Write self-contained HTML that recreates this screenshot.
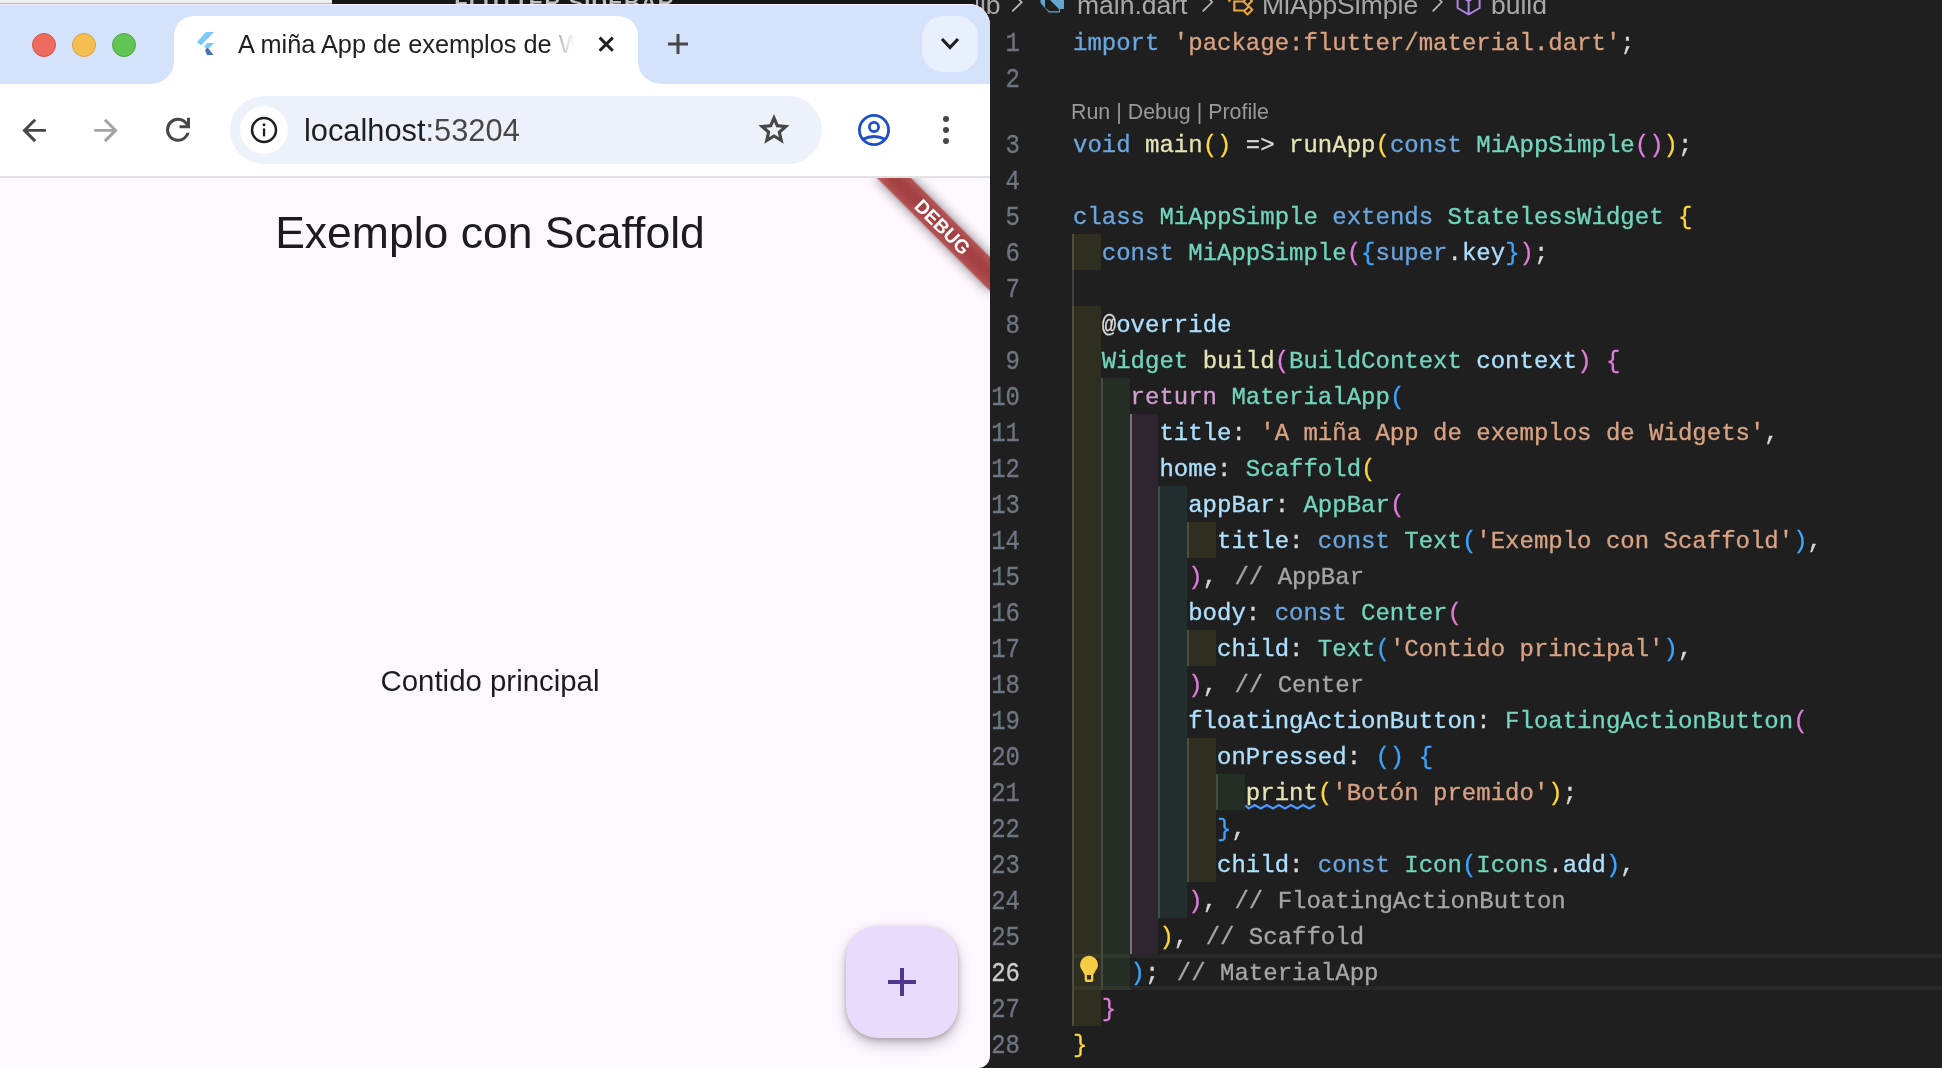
<!DOCTYPE html>
<html><head><meta charset="utf-8"><style>
*{margin:0;padding:0;box-sizing:border-box}
html,body{width:1942px;height:1068px;overflow:hidden;background:#1f1f1f}
body{position:relative;font-family:"Liberation Sans",sans-serif}
.ab{position:absolute}
.ln{position:absolute;left:960px;width:60px;text-align:right;font-family:"Liberation Mono",monospace;font-size:24px;line-height:36px;height:36px;white-space:pre;-webkit-text-stroke:0.3px currentColor;transform:scaleY(1.13);transform-origin:50% 25px}
.cl{position:absolute;left:1073px;font-family:"Liberation Mono",monospace;font-size:24px;line-height:36px;height:36px;white-space:pre;-webkit-text-stroke:0.3px currentColor}
.g{position:absolute;width:2px;height:36px}
.rb{position:absolute;height:36px}
</style></head><body>
<div id="root" style="position:absolute;left:0;top:0;width:1942px;height:1068px;overflow:hidden;will-change:transform">
<div style="position:absolute;left:1073px;top:954px;width:869px;height:36px;border-top:4px solid #282828;border-bottom:4px solid #282828"></div>
<div class="g" style="left:1072.0px;top:234px;background:#404040"></div>
<div class="g" style="left:1072.0px;top:270px;background:#404040"></div>
<div class="g" style="left:1072.0px;top:306px;background:#404040"></div>
<div class="g" style="left:1072.0px;top:342px;background:#404040"></div>
<div class="g" style="left:1072.0px;top:378px;background:#404040"></div>
<div class="g" style="left:1100.8px;top:378px;background:#404040"></div>
<div class="g" style="left:1072.0px;top:414px;background:#404040"></div>
<div class="g" style="left:1100.8px;top:414px;background:#404040"></div>
<div class="g" style="left:1129.6px;top:414px;background:#707070"></div>
<div class="g" style="left:1072.0px;top:450px;background:#404040"></div>
<div class="g" style="left:1100.8px;top:450px;background:#404040"></div>
<div class="g" style="left:1129.6px;top:450px;background:#707070"></div>
<div class="g" style="left:1072.0px;top:486px;background:#404040"></div>
<div class="g" style="left:1100.8px;top:486px;background:#404040"></div>
<div class="g" style="left:1129.6px;top:486px;background:#707070"></div>
<div class="g" style="left:1158.4px;top:486px;background:#404040"></div>
<div class="g" style="left:1072.0px;top:522px;background:#404040"></div>
<div class="g" style="left:1100.8px;top:522px;background:#404040"></div>
<div class="g" style="left:1129.6px;top:522px;background:#707070"></div>
<div class="g" style="left:1158.4px;top:522px;background:#404040"></div>
<div class="g" style="left:1187.2px;top:522px;background:#404040"></div>
<div class="g" style="left:1072.0px;top:558px;background:#404040"></div>
<div class="g" style="left:1100.8px;top:558px;background:#404040"></div>
<div class="g" style="left:1129.6px;top:558px;background:#707070"></div>
<div class="g" style="left:1158.4px;top:558px;background:#404040"></div>
<div class="g" style="left:1072.0px;top:594px;background:#404040"></div>
<div class="g" style="left:1100.8px;top:594px;background:#404040"></div>
<div class="g" style="left:1129.6px;top:594px;background:#707070"></div>
<div class="g" style="left:1158.4px;top:594px;background:#404040"></div>
<div class="g" style="left:1072.0px;top:630px;background:#404040"></div>
<div class="g" style="left:1100.8px;top:630px;background:#404040"></div>
<div class="g" style="left:1129.6px;top:630px;background:#707070"></div>
<div class="g" style="left:1158.4px;top:630px;background:#404040"></div>
<div class="g" style="left:1187.2px;top:630px;background:#404040"></div>
<div class="g" style="left:1072.0px;top:666px;background:#404040"></div>
<div class="g" style="left:1100.8px;top:666px;background:#404040"></div>
<div class="g" style="left:1129.6px;top:666px;background:#707070"></div>
<div class="g" style="left:1158.4px;top:666px;background:#404040"></div>
<div class="g" style="left:1072.0px;top:702px;background:#404040"></div>
<div class="g" style="left:1100.8px;top:702px;background:#404040"></div>
<div class="g" style="left:1129.6px;top:702px;background:#707070"></div>
<div class="g" style="left:1158.4px;top:702px;background:#404040"></div>
<div class="g" style="left:1072.0px;top:738px;background:#404040"></div>
<div class="g" style="left:1100.8px;top:738px;background:#404040"></div>
<div class="g" style="left:1129.6px;top:738px;background:#707070"></div>
<div class="g" style="left:1158.4px;top:738px;background:#404040"></div>
<div class="g" style="left:1187.2px;top:738px;background:#404040"></div>
<div class="g" style="left:1072.0px;top:774px;background:#404040"></div>
<div class="g" style="left:1100.8px;top:774px;background:#404040"></div>
<div class="g" style="left:1129.6px;top:774px;background:#707070"></div>
<div class="g" style="left:1158.4px;top:774px;background:#404040"></div>
<div class="g" style="left:1187.2px;top:774px;background:#404040"></div>
<div class="g" style="left:1216.0px;top:774px;background:#404040"></div>
<div class="g" style="left:1072.0px;top:810px;background:#404040"></div>
<div class="g" style="left:1100.8px;top:810px;background:#404040"></div>
<div class="g" style="left:1129.6px;top:810px;background:#707070"></div>
<div class="g" style="left:1158.4px;top:810px;background:#404040"></div>
<div class="g" style="left:1187.2px;top:810px;background:#404040"></div>
<div class="g" style="left:1072.0px;top:846px;background:#404040"></div>
<div class="g" style="left:1100.8px;top:846px;background:#404040"></div>
<div class="g" style="left:1129.6px;top:846px;background:#707070"></div>
<div class="g" style="left:1158.4px;top:846px;background:#404040"></div>
<div class="g" style="left:1187.2px;top:846px;background:#404040"></div>
<div class="g" style="left:1072.0px;top:882px;background:#404040"></div>
<div class="g" style="left:1100.8px;top:882px;background:#404040"></div>
<div class="g" style="left:1129.6px;top:882px;background:#707070"></div>
<div class="g" style="left:1158.4px;top:882px;background:#404040"></div>
<div class="g" style="left:1072.0px;top:918px;background:#404040"></div>
<div class="g" style="left:1100.8px;top:918px;background:#404040"></div>
<div class="g" style="left:1129.6px;top:918px;background:#707070"></div>
<div class="g" style="left:1072.0px;top:954px;background:#404040"></div>
<div class="g" style="left:1100.8px;top:954px;background:#404040"></div>
<div class="g" style="left:1072.0px;top:990px;background:#404040"></div>
<div class="rb" style="left:1072.0px;top:234px;width:28.8px;background:rgba(255,255,64,0.07)"></div>
<div class="rb" style="left:1072.0px;top:306px;width:28.8px;background:rgba(255,255,64,0.07)"></div>
<div class="rb" style="left:1072.0px;top:342px;width:28.8px;background:rgba(255,255,64,0.07)"></div>
<div class="rb" style="left:1072.0px;top:378px;width:28.8px;background:rgba(255,255,64,0.07)"></div>
<div class="rb" style="left:1100.8px;top:378px;width:28.8px;background:rgba(127,255,127,0.07)"></div>
<div class="rb" style="left:1072.0px;top:414px;width:28.8px;background:rgba(255,255,64,0.07)"></div>
<div class="rb" style="left:1100.8px;top:414px;width:28.8px;background:rgba(127,255,127,0.07)"></div>
<div class="rb" style="left:1129.6px;top:414px;width:28.8px;background:rgba(255,127,255,0.07)"></div>
<div class="rb" style="left:1072.0px;top:450px;width:28.8px;background:rgba(255,255,64,0.07)"></div>
<div class="rb" style="left:1100.8px;top:450px;width:28.8px;background:rgba(127,255,127,0.07)"></div>
<div class="rb" style="left:1129.6px;top:450px;width:28.8px;background:rgba(255,127,255,0.07)"></div>
<div class="rb" style="left:1072.0px;top:486px;width:28.8px;background:rgba(255,255,64,0.07)"></div>
<div class="rb" style="left:1100.8px;top:486px;width:28.8px;background:rgba(127,255,127,0.07)"></div>
<div class="rb" style="left:1129.6px;top:486px;width:28.8px;background:rgba(255,127,255,0.07)"></div>
<div class="rb" style="left:1158.4px;top:486px;width:28.8px;background:rgba(79,236,236,0.07)"></div>
<div class="rb" style="left:1072.0px;top:522px;width:28.8px;background:rgba(255,255,64,0.07)"></div>
<div class="rb" style="left:1100.8px;top:522px;width:28.8px;background:rgba(127,255,127,0.07)"></div>
<div class="rb" style="left:1129.6px;top:522px;width:28.8px;background:rgba(255,127,255,0.07)"></div>
<div class="rb" style="left:1158.4px;top:522px;width:28.8px;background:rgba(79,236,236,0.07)"></div>
<div class="rb" style="left:1187.2px;top:522px;width:28.8px;background:rgba(255,255,64,0.07)"></div>
<div class="rb" style="left:1072.0px;top:558px;width:28.8px;background:rgba(255,255,64,0.07)"></div>
<div class="rb" style="left:1100.8px;top:558px;width:28.8px;background:rgba(127,255,127,0.07)"></div>
<div class="rb" style="left:1129.6px;top:558px;width:28.8px;background:rgba(255,127,255,0.07)"></div>
<div class="rb" style="left:1158.4px;top:558px;width:28.8px;background:rgba(79,236,236,0.07)"></div>
<div class="rb" style="left:1072.0px;top:594px;width:28.8px;background:rgba(255,255,64,0.07)"></div>
<div class="rb" style="left:1100.8px;top:594px;width:28.8px;background:rgba(127,255,127,0.07)"></div>
<div class="rb" style="left:1129.6px;top:594px;width:28.8px;background:rgba(255,127,255,0.07)"></div>
<div class="rb" style="left:1158.4px;top:594px;width:28.8px;background:rgba(79,236,236,0.07)"></div>
<div class="rb" style="left:1072.0px;top:630px;width:28.8px;background:rgba(255,255,64,0.07)"></div>
<div class="rb" style="left:1100.8px;top:630px;width:28.8px;background:rgba(127,255,127,0.07)"></div>
<div class="rb" style="left:1129.6px;top:630px;width:28.8px;background:rgba(255,127,255,0.07)"></div>
<div class="rb" style="left:1158.4px;top:630px;width:28.8px;background:rgba(79,236,236,0.07)"></div>
<div class="rb" style="left:1187.2px;top:630px;width:28.8px;background:rgba(255,255,64,0.07)"></div>
<div class="rb" style="left:1072.0px;top:666px;width:28.8px;background:rgba(255,255,64,0.07)"></div>
<div class="rb" style="left:1100.8px;top:666px;width:28.8px;background:rgba(127,255,127,0.07)"></div>
<div class="rb" style="left:1129.6px;top:666px;width:28.8px;background:rgba(255,127,255,0.07)"></div>
<div class="rb" style="left:1158.4px;top:666px;width:28.8px;background:rgba(79,236,236,0.07)"></div>
<div class="rb" style="left:1072.0px;top:702px;width:28.8px;background:rgba(255,255,64,0.07)"></div>
<div class="rb" style="left:1100.8px;top:702px;width:28.8px;background:rgba(127,255,127,0.07)"></div>
<div class="rb" style="left:1129.6px;top:702px;width:28.8px;background:rgba(255,127,255,0.07)"></div>
<div class="rb" style="left:1158.4px;top:702px;width:28.8px;background:rgba(79,236,236,0.07)"></div>
<div class="rb" style="left:1072.0px;top:738px;width:28.8px;background:rgba(255,255,64,0.07)"></div>
<div class="rb" style="left:1100.8px;top:738px;width:28.8px;background:rgba(127,255,127,0.07)"></div>
<div class="rb" style="left:1129.6px;top:738px;width:28.8px;background:rgba(255,127,255,0.07)"></div>
<div class="rb" style="left:1158.4px;top:738px;width:28.8px;background:rgba(79,236,236,0.07)"></div>
<div class="rb" style="left:1187.2px;top:738px;width:28.8px;background:rgba(255,255,64,0.07)"></div>
<div class="rb" style="left:1072.0px;top:774px;width:28.8px;background:rgba(255,255,64,0.07)"></div>
<div class="rb" style="left:1100.8px;top:774px;width:28.8px;background:rgba(127,255,127,0.07)"></div>
<div class="rb" style="left:1129.6px;top:774px;width:28.8px;background:rgba(255,127,255,0.07)"></div>
<div class="rb" style="left:1158.4px;top:774px;width:28.8px;background:rgba(79,236,236,0.07)"></div>
<div class="rb" style="left:1187.2px;top:774px;width:28.8px;background:rgba(255,255,64,0.07)"></div>
<div class="rb" style="left:1216.0px;top:774px;width:28.8px;background:rgba(127,255,127,0.07)"></div>
<div class="rb" style="left:1072.0px;top:810px;width:28.8px;background:rgba(255,255,64,0.07)"></div>
<div class="rb" style="left:1100.8px;top:810px;width:28.8px;background:rgba(127,255,127,0.07)"></div>
<div class="rb" style="left:1129.6px;top:810px;width:28.8px;background:rgba(255,127,255,0.07)"></div>
<div class="rb" style="left:1158.4px;top:810px;width:28.8px;background:rgba(79,236,236,0.07)"></div>
<div class="rb" style="left:1187.2px;top:810px;width:28.8px;background:rgba(255,255,64,0.07)"></div>
<div class="rb" style="left:1072.0px;top:846px;width:28.8px;background:rgba(255,255,64,0.07)"></div>
<div class="rb" style="left:1100.8px;top:846px;width:28.8px;background:rgba(127,255,127,0.07)"></div>
<div class="rb" style="left:1129.6px;top:846px;width:28.8px;background:rgba(255,127,255,0.07)"></div>
<div class="rb" style="left:1158.4px;top:846px;width:28.8px;background:rgba(79,236,236,0.07)"></div>
<div class="rb" style="left:1187.2px;top:846px;width:28.8px;background:rgba(255,255,64,0.07)"></div>
<div class="rb" style="left:1072.0px;top:882px;width:28.8px;background:rgba(255,255,64,0.07)"></div>
<div class="rb" style="left:1100.8px;top:882px;width:28.8px;background:rgba(127,255,127,0.07)"></div>
<div class="rb" style="left:1129.6px;top:882px;width:28.8px;background:rgba(255,127,255,0.07)"></div>
<div class="rb" style="left:1158.4px;top:882px;width:28.8px;background:rgba(79,236,236,0.07)"></div>
<div class="rb" style="left:1072.0px;top:918px;width:28.8px;background:rgba(255,255,64,0.07)"></div>
<div class="rb" style="left:1100.8px;top:918px;width:28.8px;background:rgba(127,255,127,0.07)"></div>
<div class="rb" style="left:1129.6px;top:918px;width:28.8px;background:rgba(255,127,255,0.07)"></div>
<div class="rb" style="left:1072.0px;top:954px;width:28.8px;background:rgba(255,255,64,0.07)"></div>
<div class="rb" style="left:1100.8px;top:954px;width:28.8px;background:rgba(127,255,127,0.07)"></div>
<div class="rb" style="left:1072.0px;top:990px;width:28.8px;background:rgba(255,255,64,0.07)"></div>
<div class="ln" style="top:26.6px;color:#6e7681">1</div>
<div class="cl" style="top:26px"><span style="color:#6aa6de">import</span><span style="color:#d8d8d8"> </span><span style="color:#d9a383">&#x27;package:flutter/material.dart&#x27;</span><span style="color:#d8d8d8">;</span></div>
<div class="ln" style="top:62.6px;color:#6e7681">2</div>
<div class="cl" style="top:62px"></div>
<div class="ln" style="top:128.6px;color:#6e7681">3</div>
<div class="cl" style="top:128px"><span style="color:#6aa6de">void</span><span style="color:#d8d8d8"> </span><span style="color:#e4e4b4">main</span><span style="color:#ffd83a">()</span><span style="color:#d8d8d8"> =&gt; </span><span style="color:#e4e4b4">runApp</span><span style="color:#ffd83a">(</span><span style="color:#6aa6de">const</span><span style="color:#d8d8d8"> </span><span style="color:#72d6bd">MiAppSimple</span><span style="color:#e07ddc">()</span><span style="color:#ffd83a">)</span><span style="color:#d8d8d8">;</span></div>
<div class="ln" style="top:164.6px;color:#6e7681">4</div>
<div class="cl" style="top:164px"></div>
<div class="ln" style="top:200.6px;color:#6e7681">5</div>
<div class="cl" style="top:200px"><span style="color:#6aa6de">class</span><span style="color:#d8d8d8"> </span><span style="color:#72d6bd">MiAppSimple</span><span style="color:#d8d8d8"> </span><span style="color:#6aa6de">extends</span><span style="color:#d8d8d8"> </span><span style="color:#72d6bd">StatelessWidget</span><span style="color:#d8d8d8"> </span><span style="color:#ffd83a">{</span></div>
<div class="ln" style="top:236.6px;color:#6e7681">6</div>
<div class="cl" style="top:236px"><span style="color:#d8d8d8">  </span><span style="color:#6aa6de">const</span><span style="color:#d8d8d8"> </span><span style="color:#72d6bd">MiAppSimple</span><span style="color:#e07ddc">(</span><span style="color:#3aa6ff">{</span><span style="color:#6aa6de">super</span><span style="color:#d8d8d8">.</span><span style="color:#ace0fe">key</span><span style="color:#3aa6ff">}</span><span style="color:#e07ddc">)</span><span style="color:#d8d8d8">;</span></div>
<div class="ln" style="top:272.6px;color:#6e7681">7</div>
<div class="cl" style="top:272px"></div>
<div class="ln" style="top:308.6px;color:#6e7681">8</div>
<div class="cl" style="top:308px"><span style="color:#d8d8d8">  </span><span style="color:#d8d8d8">@</span><span style="color:#ace0fe">override</span></div>
<div class="ln" style="top:344.6px;color:#6e7681">9</div>
<div class="cl" style="top:344px"><span style="color:#d8d8d8">  </span><span style="color:#72d6bd">Widget</span><span style="color:#d8d8d8"> </span><span style="color:#e4e4b4">build</span><span style="color:#e07ddc">(</span><span style="color:#72d6bd">BuildContext</span><span style="color:#d8d8d8"> </span><span style="color:#ace0fe">context</span><span style="color:#e07ddc">)</span><span style="color:#d8d8d8"> </span><span style="color:#e07ddc">{</span></div>
<div class="ln" style="top:380.6px;color:#6e7681">10</div>
<div class="cl" style="top:380px"><span style="color:#d8d8d8">    </span><span style="color:#d49cd2">return</span><span style="color:#d8d8d8"> </span><span style="color:#72d6bd">MaterialApp</span><span style="color:#3aa6ff">(</span></div>
<div class="ln" style="top:416.6px;color:#6e7681">11</div>
<div class="cl" style="top:416px"><span style="color:#d8d8d8">      </span><span style="color:#ace0fe">title</span><span style="color:#d8d8d8">: </span><span style="color:#d9a383">&#x27;A miña App de exemplos de Widgets&#x27;</span><span style="color:#d8d8d8">,</span></div>
<div class="ln" style="top:452.6px;color:#6e7681">12</div>
<div class="cl" style="top:452px"><span style="color:#d8d8d8">      </span><span style="color:#ace0fe">home</span><span style="color:#d8d8d8">: </span><span style="color:#72d6bd">Scaffold</span><span style="color:#ffd83a">(</span></div>
<div class="ln" style="top:488.6px;color:#6e7681">13</div>
<div class="cl" style="top:488px"><span style="color:#d8d8d8">        </span><span style="color:#ace0fe">appBar</span><span style="color:#d8d8d8">: </span><span style="color:#72d6bd">AppBar</span><span style="color:#e07ddc">(</span></div>
<div class="ln" style="top:524.6px;color:#6e7681">14</div>
<div class="cl" style="top:524px"><span style="color:#d8d8d8">          </span><span style="color:#ace0fe">title</span><span style="color:#d8d8d8">: </span><span style="color:#6aa6de">const</span><span style="color:#d8d8d8"> </span><span style="color:#72d6bd">Text</span><span style="color:#3aa6ff">(</span><span style="color:#d9a383">&#x27;Exemplo con Scaffold&#x27;</span><span style="color:#3aa6ff">)</span><span style="color:#d8d8d8">,</span></div>
<div class="ln" style="top:560.6px;color:#6e7681">15</div>
<div class="cl" style="top:560px"><span style="color:#d8d8d8">        </span><span style="color:#e07ddc">)</span><span style="color:#d8d8d8">, </span><span style="color:#a6a6a6;margin-left:3px">// AppBar</span></div>
<div class="ln" style="top:596.6px;color:#6e7681">16</div>
<div class="cl" style="top:596px"><span style="color:#d8d8d8">        </span><span style="color:#ace0fe">body</span><span style="color:#d8d8d8">: </span><span style="color:#6aa6de">const</span><span style="color:#d8d8d8"> </span><span style="color:#72d6bd">Center</span><span style="color:#e07ddc">(</span></div>
<div class="ln" style="top:632.6px;color:#6e7681">17</div>
<div class="cl" style="top:632px"><span style="color:#d8d8d8">          </span><span style="color:#ace0fe">child</span><span style="color:#d8d8d8">: </span><span style="color:#72d6bd">Text</span><span style="color:#3aa6ff">(</span><span style="color:#d9a383">&#x27;Contido principal&#x27;</span><span style="color:#3aa6ff">)</span><span style="color:#d8d8d8">,</span></div>
<div class="ln" style="top:668.6px;color:#6e7681">18</div>
<div class="cl" style="top:668px"><span style="color:#d8d8d8">        </span><span style="color:#e07ddc">)</span><span style="color:#d8d8d8">, </span><span style="color:#a6a6a6;margin-left:3px">// Center</span></div>
<div class="ln" style="top:704.6px;color:#6e7681">19</div>
<div class="cl" style="top:704px"><span style="color:#d8d8d8">        </span><span style="color:#ace0fe">floatingActionButton</span><span style="color:#d8d8d8">: </span><span style="color:#72d6bd">FloatingActionButton</span><span style="color:#e07ddc">(</span></div>
<div class="ln" style="top:740.6px;color:#6e7681">20</div>
<div class="cl" style="top:740px"><span style="color:#d8d8d8">          </span><span style="color:#ace0fe">onPressed</span><span style="color:#d8d8d8">: </span><span style="color:#3aa6ff">()</span><span style="color:#d8d8d8"> </span><span style="color:#3aa6ff">{</span></div>
<div class="ln" style="top:776.6px;color:#6e7681">21</div>
<div class="cl" style="top:776px"><span style="color:#d8d8d8">            </span><span style="color:#e4e4b4">print</span><span style="color:#ffd83a">(</span><span style="color:#d9a383">&#x27;Botón premido&#x27;</span><span style="color:#ffd83a">)</span><span style="color:#d8d8d8">;</span></div>
<div class="ln" style="top:812.6px;color:#6e7681">22</div>
<div class="cl" style="top:812px"><span style="color:#d8d8d8">          </span><span style="color:#3aa6ff">}</span><span style="color:#d8d8d8">,</span></div>
<div class="ln" style="top:848.6px;color:#6e7681">23</div>
<div class="cl" style="top:848px"><span style="color:#d8d8d8">          </span><span style="color:#ace0fe">child</span><span style="color:#d8d8d8">: </span><span style="color:#6aa6de">const</span><span style="color:#d8d8d8"> </span><span style="color:#72d6bd">Icon</span><span style="color:#3aa6ff">(</span><span style="color:#72d6bd">Icons</span><span style="color:#d8d8d8">.</span><span style="color:#ace0fe">add</span><span style="color:#3aa6ff">)</span><span style="color:#d8d8d8">,</span></div>
<div class="ln" style="top:884.6px;color:#6e7681">24</div>
<div class="cl" style="top:884px"><span style="color:#d8d8d8">        </span><span style="color:#e07ddc">)</span><span style="color:#d8d8d8">, </span><span style="color:#a6a6a6;margin-left:3px">// FloatingActionButton</span></div>
<div class="ln" style="top:920.6px;color:#6e7681">25</div>
<div class="cl" style="top:920px"><span style="color:#d8d8d8">      </span><span style="color:#ffd83a">)</span><span style="color:#d8d8d8">, </span><span style="color:#a6a6a6;margin-left:3px">// Scaffold</span></div>
<div class="ln" style="top:956.6px;color:#cccccc">26</div>
<div class="cl" style="top:956px"><span style="color:#d8d8d8">    </span><span style="color:#3aa6ff">)</span><span style="color:#d8d8d8">; </span><span style="color:#a6a6a6;margin-left:3px">// MaterialApp</span></div>
<div class="ln" style="top:992.6px;color:#6e7681">27</div>
<div class="cl" style="top:992px"><span style="color:#d8d8d8">  </span><span style="color:#e07ddc">}</span></div>
<div class="ln" style="top:1028.6px;color:#6e7681">28</div>
<div class="cl" style="top:1028px"><span style="color:#ffd83a">}</span></div>
<div class="ab" style="left:1071px;top:100px;font-size:21.4px;line-height:24px;color:#999999;white-space:pre">Run | Debug | Profile</div>
<svg class="ab" style="left:0;top:0" width="1942" height="1068"><path d="M1245.5 805.5 L1248.7 808.5 L1254.8 805.0 L1260.8 808.5 L1266.8 805.0 L1272.9 808.5 L1278.9 805.0 L1285.0 808.5 L1291.0 805.0 L1297.1 808.5 L1303.1 805.0 L1309.2 808.5 L1315.2 805.0" fill="none" stroke="#4c9aff" stroke-width="2.2"/></svg>
<svg class="ab" style="left:1076px;top:954px" width="26" height="36"><path d="M6.6 17.1 A9 9 0 1 1 19.4 17.1 L17.3 21 V26 Q17.3 28 15.3 28 H10.7 Q8.7 28 8.7 26 V21 Z" fill="#f6cd43"/><rect x="11" y="21" width="4" height="4.5" fill="#2b2a22"/></svg>
<div class="ab" style="left:974px;top:-9px;font-size:26.5px;line-height:28px;color:#a9a9a9;white-space:pre">lib</div>
<div class="ab" style="left:1077px;top:-9px;font-size:26.5px;line-height:28px;color:#a9a9a9;white-space:pre">main.dart</div>
<div class="ab" style="left:1262px;top:-9px;font-size:26.5px;line-height:28px;color:#a9a9a9;white-space:pre">MiAppSimple</div>
<div class="ab" style="left:1491px;top:-9px;font-size:26.5px;line-height:28px;color:#a9a9a9;white-space:pre">build</div>
<svg class="ab" style="left:0;top:0" width="1942" height="30">
<path d="M1012.3 11.3 L1021.7 2.2 L1012.3 -7 M1202.7 11.3 L1212.2 2 L1202.7 -7.5 M1432.7 11.3 L1441.7 2 L1432.7 -7.5" stroke="#b9b9b9" stroke-width="1.7" fill="none"/>
<path d="M1040.5 -8 L1040.5 3 L1049 12.5 L1060 12.5 L1060 9 L1064 9 L1064 -8 Z" fill="#64a6d0"/>
<path d="M1045 -8 L1045 7.5 L1049.5 11.3 L1059 11.3 L1059 9 L1050 0 L1050 -8 Z" fill="#1f1f1f"/>
<circle cx="1229.4" cy="0.6" r="1.3" fill="#e8a83e"/>
<path d="M1244.5 1.5 H1234.3 V10.5 H1244.5" stroke="#e8a83e" stroke-width="2.2" fill="none"/>
<path d="M1243.5 1.5 L1248 -3 L1252 1 L1247.5 5.5 Z M1244 11 L1249 6.5 L1252.3 9.8 L1247.5 14.5 Z" stroke="#e8a83e" stroke-width="2" fill="none" stroke-linejoin="round"/>
<path d="M1457.6 -3 V8 L1468.6 14.5 L1479.6 8 V-3 M1468.6 14 V1 M1463 -2 L1468.6 1 L1474 -2" stroke="#b384e5" stroke-width="2" fill="none" stroke-linejoin="round"/>
<rect x="788" y="0" width="1.5" height="4" fill="#444"/>
<rect x="890" y="0" width="18" height="4" fill="#bdbdbd"/>
</svg>

<div class="ab" style="left:0;top:0;width:332px;height:30px;background:#efefef"></div>
<div class="ab" style="left:0;top:3px;width:332px;height:1px;background:#b4b4b4"></div>
<div class="ab" style="left:332px;top:0;width:644px;height:4px;background:#161616"></div>
<div class="ab" style="left:440px;top:-10px;font-size:22px;font-weight:bold;color:#bdbdbd;letter-spacing:1px;white-space:pre">  FLUTTER SIDEBAR</div>
<!-- window -->
<div class="ab" id="win" style="left:-16px;top:4px;width:1006px;height:1064px;border-radius:14px 21px 12px 0;overflow:hidden;background:#fdf7ff">
  <div class="ab" style="left:0;top:0;width:1006px;height:80px;background:#d5e2fb"></div>
  <div class="ab" style="left:0;top:80px;width:1006px;height:93px;background:#ffffff"></div>
  <div class="ab" style="left:0;top:172px;width:1006px;height:2px;background:#e2e2e2"></div>
  <div class="ab" style="left:0;top:0;width:1006px;height:1px;background:rgba(255,255,255,0.6)"></div>
</div>
<!-- traffic lights -->
<div class="ab" style="left:32px;top:33px;width:24px;height:24px;border-radius:50%;background:#ec6a5e;border:1px solid #d6554a"></div>
<div class="ab" style="left:72px;top:33px;width:24px;height:24px;border-radius:50%;background:#f4bf4f;border:1px solid #d9a13e"></div>
<div class="ab" style="left:112px;top:33px;width:24px;height:24px;border-radius:50%;background:#61c554;border:1px solid #4fa73f"></div>
<!-- active tab -->
<svg class="ab" style="left:0;top:0" width="990" height="90">
  <path d="M150 84 A24 22 0 0 0 174 62 L174 36 A20 20 0 0 1 194 16 L618 16 A20 20 0 0 1 638 36 L638 62 A24 22 0 0 0 662 84 Z" fill="#ffffff"/>
  <rect x="922" y="16" width="56" height="56" rx="21" fill="#e9f0fd"/>
  <path d="M942 39 L950 47.5 L958 39" fill="none" stroke="#1f1f1f" stroke-width="3.2"/>
  <path d="M668 44 H688 M678 34 V54" stroke="#474747" stroke-width="3"/>
  <path d="M599.6 37.6 L612.8 50.8 M612.8 37.6 L599.6 50.8" stroke="#1f1f1f" stroke-width="3"/>
  <!-- flutter favicon -->
  <g opacity="0.8">
    <path d="M206 32 H214 L201 45.5 L197 42 Z" fill="#5cbdf3"/>
    <path d="M207 43 H214 L208 49.5 L204 46.5 Z" fill="#5cbdf3"/>
    <path d="M205 50 L207.5 47.5 L213.5 55 H207 Z" fill="#1a4a9a"/>
  </g>
</svg>
<div class="ab" style="left:238px;top:28px;font-size:25.3px;line-height:32px;color:#1f1f1f;white-space:nowrap;width:340px;overflow:hidden;-webkit-mask-image:linear-gradient(90deg,#000 312px,rgba(0,0,0,0.3) 322px,transparent 337px)">A miña App de exemplos de Widgets</div>
<!-- toolbar icons -->
<svg class="ab" style="left:0;top:84px" width="990" height="94">
  <g transform="translate(16.5,64) scale(0.0367)" fill="#474747"><path d="M313-440l224 224-57 56-320-320 320-320 57 56-224 224h487v80H313Z"/></g>
  <g transform="translate(88.3,64) scale(0.0367)" fill="#474747" fill-opacity="0.5"><path d="M647-440H160v-80h487L423-744l57-56 320 320-320 320-57-56 224-224Z"/></g>
  <g transform="translate(160,63.8) scale(0.0375)" fill="#474747"><path d="M480-160q-134 0-227-93t-93-227q0-134 93-227t227-93q69 0 132 28.5T720-690v-110h80v280H520v-80h168q-32-56-87.5-88T480-720q-100 0-170 70t-70 170q0 100 70 170t170 70q77 0 139-44t87-116h84q-28 106-114 173t-196 67Z"/></g>
</svg>
<div class="ab" style="left:230px;top:96px;width:592px;height:68px;border-radius:34px;background:#edf2fa"></div>
<div class="ab" style="left:240px;top:106px;width:48px;height:48px;border-radius:50%;background:#ffffff"></div>
<svg class="ab" style="left:0;top:84px" width="990" height="94">
  <circle cx="264" cy="46" r="12" fill="none" stroke="#1f1f1f" stroke-width="2.5"/>
  <rect x="262.9" y="44.4" width="2.3" height="8" fill="#1f1f1f"/>
  <circle cx="264" cy="40.7" r="1.5" fill="#1f1f1f"/>
  <g transform="translate(755.28,64.32) scale(0.039)" fill="#474747"><path d="m354-287 126-76 126 77-33-144 111-96-146-13-58-136-58 135-146 13 111 97-33 143ZM233-120l65-281L80-590l288-25 112-265 112 265 288 25-218 189 65 281-247-149-247 149Z"/></g>
  <circle cx="874" cy="46" r="14.6" fill="none" stroke="#1c4fc9" stroke-width="2.8"/>
  <circle cx="874" cy="43" r="4.6" fill="none" stroke="#1c4fc9" stroke-width="2.8"/>
  <path d="M862.5 55.5 Q874 49.5 885.5 55.5" fill="none" stroke="#1c4fc9" stroke-width="2.8"/>
  <circle cx="946" cy="35" r="3" fill="#474747"/>
  <circle cx="946" cy="46" r="3" fill="#474747"/>
  <circle cx="946" cy="57" r="3" fill="#474747"/>
</svg>
<div class="ab" style="left:304px;top:113px;font-size:30.8px;line-height:36px;color:#1f1f1f;white-space:nowrap">localhost<span style="color:#474747">:53204</span></div>
<!-- flutter content -->
<div class="ab" style="left:0;top:211px;width:980px;text-align:center;font-size:44.5px;line-height:44px;color:#1d1b20;white-space:nowrap">Exemplo con Scaffold</div>
<div class="ab" style="left:0;top:662.5px;width:980px;text-align:center;font-size:29.4px;line-height:36px;color:#1d1b20;white-space:nowrap">Contido principal</div>
<div class="ab" style="left:0;top:178px;width:990px;height:890px;overflow:hidden">
  <div class="ab" style="left:861.9px;top:36.1px;width:160px;height:24px;transform:rotate(45deg);background:rgba(0,0,0,0.5);filter:blur(6px)"></div>
  <div class="ab" style="left:861.9px;top:36.1px;width:160px;height:24px;transform:rotate(45deg);background:rgba(183,28,28,0.627);color:#fff;font-weight:bold;font-size:19.2px;line-height:25px;text-align:center;padding-left:2px">DEBUG</div>
</div>
<div class="ab" style="left:846px;top:926px;width:112px;height:112px;border-radius:32px;background:#e7dcfb;box-shadow:0 6px 14px rgba(0,0,0,0.22),0 2px 5px rgba(0,0,0,0.2)"></div>
<svg class="ab" style="left:846px;top:926px" width="112" height="112"><path d="M42 56 H70 M56 42 V70" stroke="#4f378b" stroke-width="4"/></svg>

</div>
</body></html>
